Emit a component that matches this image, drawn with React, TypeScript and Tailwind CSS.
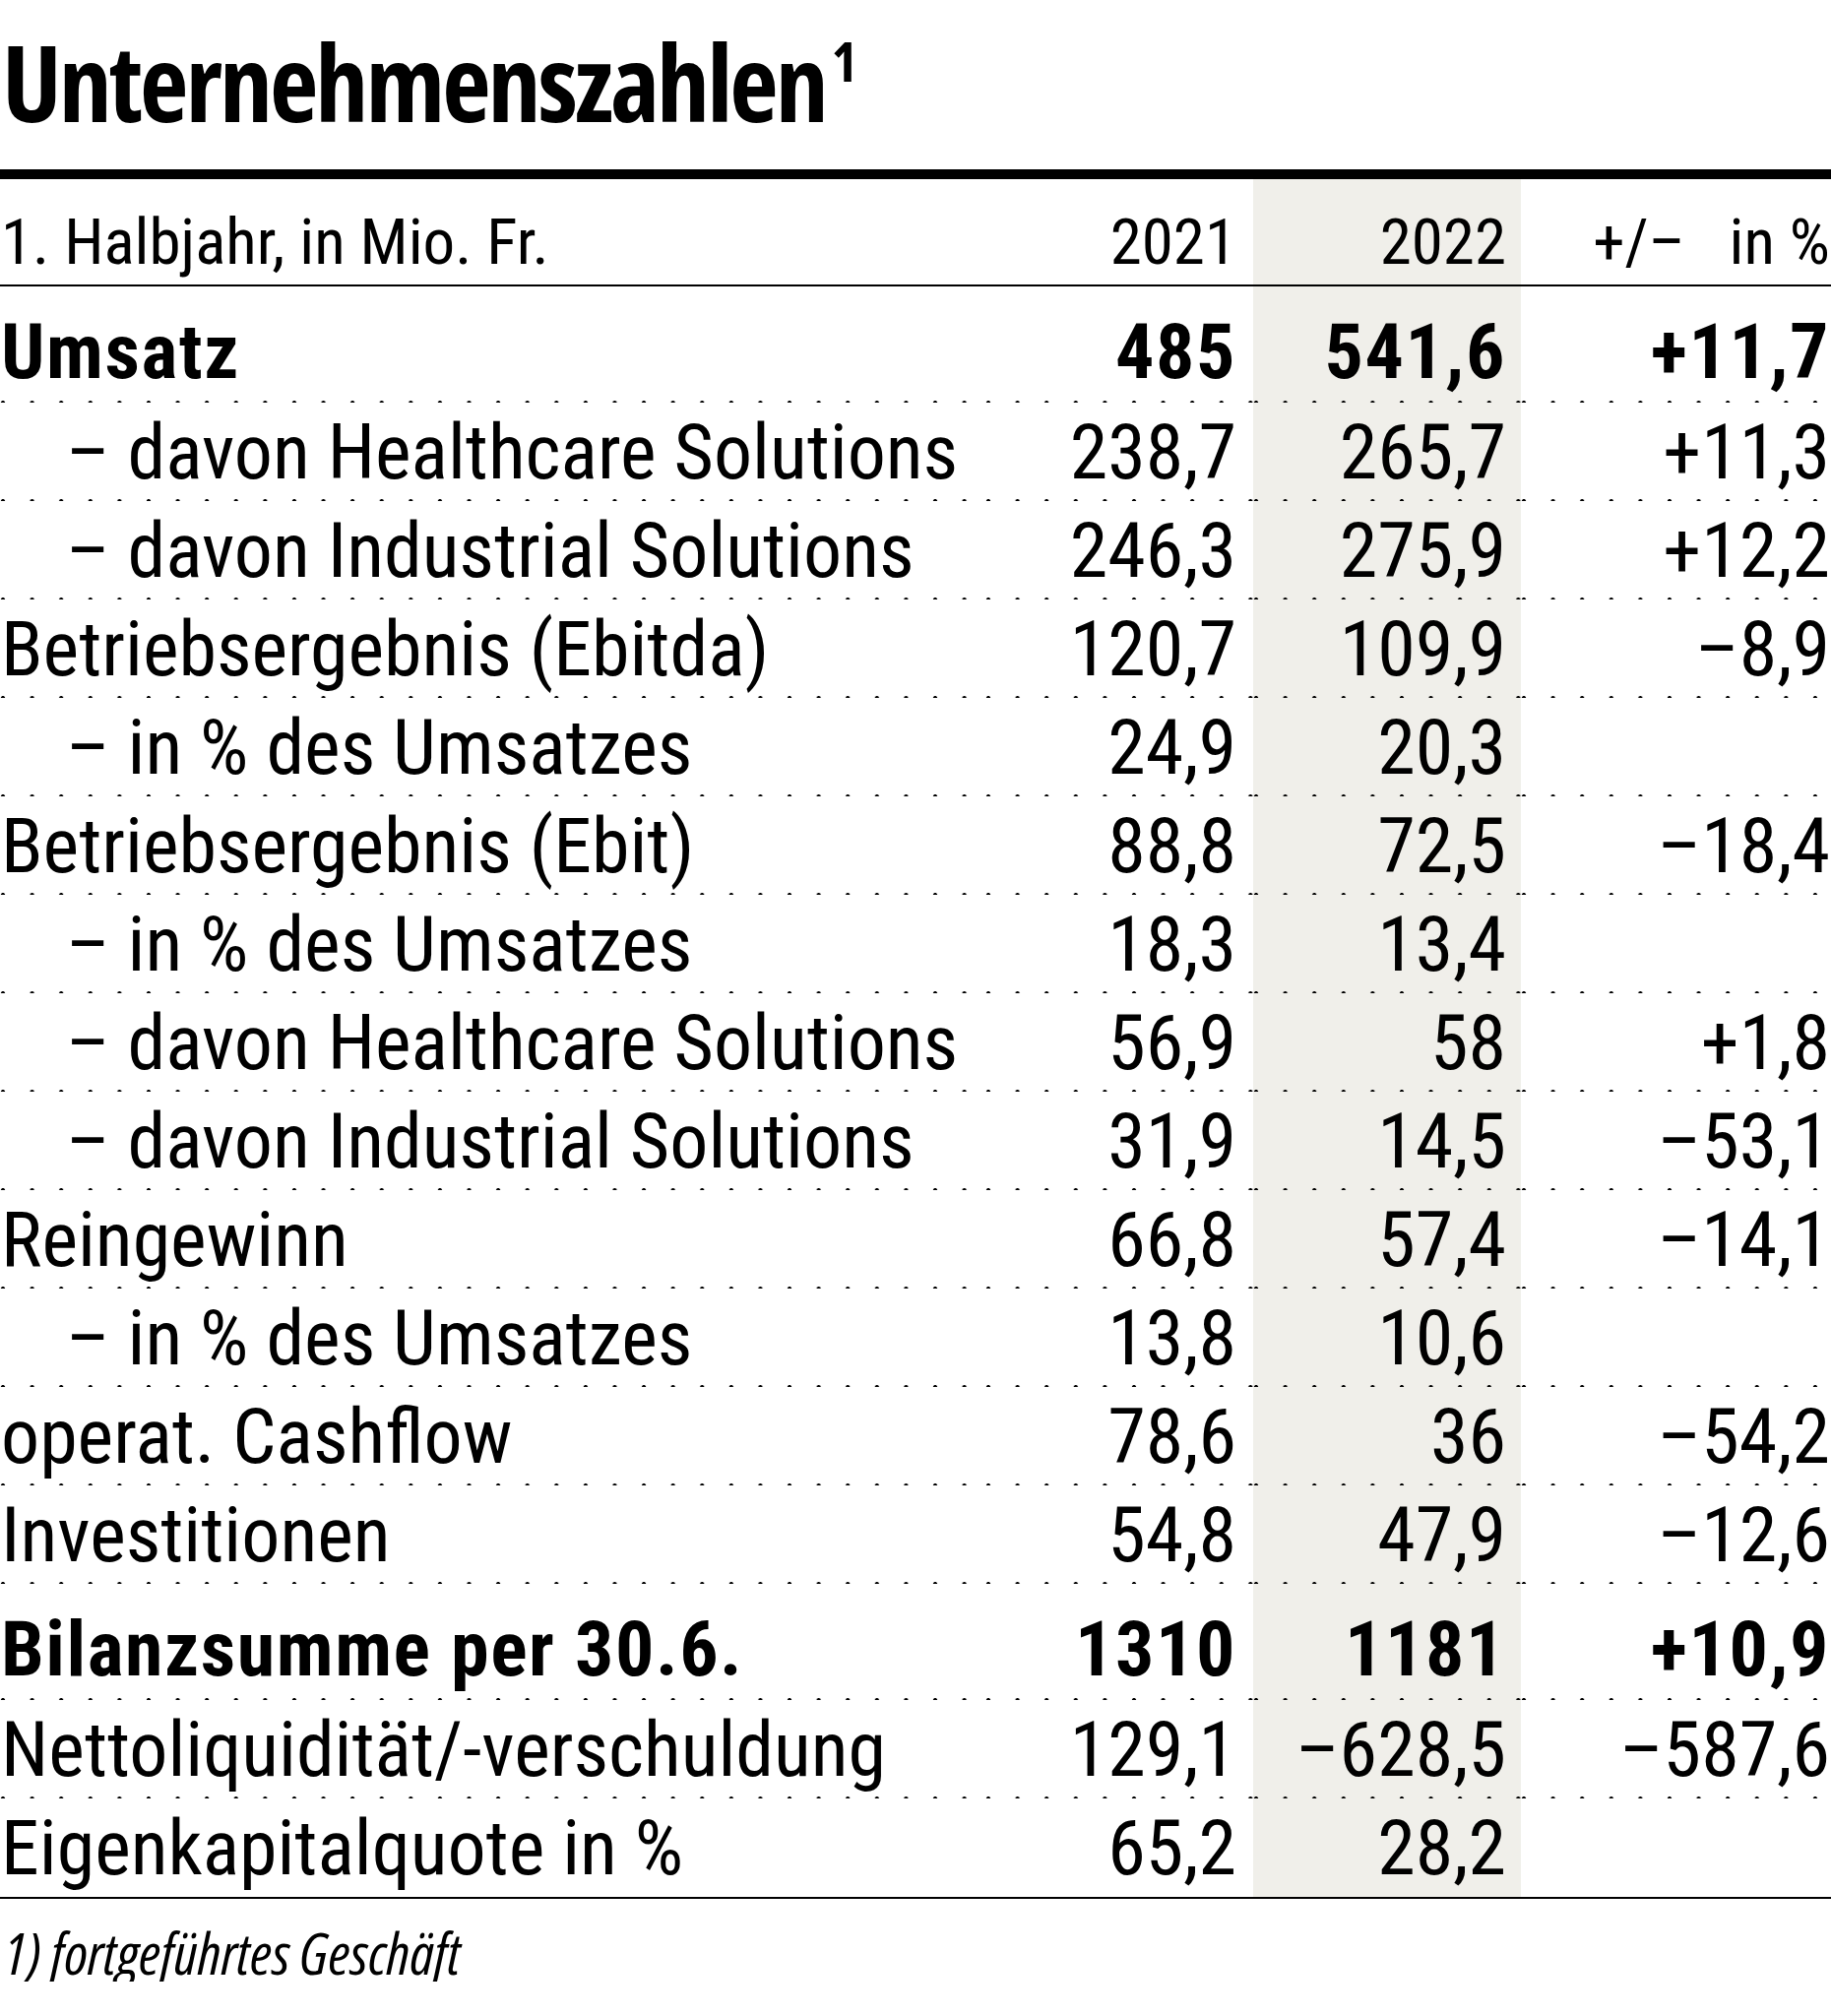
type Row = {
  label: string
  a: string
  b: string
  c: string
  sub?: boolean
  bold?: boolean
  last?: boolean
}

const rows: Row[] = [
  { label: "Umsatz", a: "485", b: "541,6", c: "+11,7", bold: true },
  { label: "– davon Healthcare Solutions", a: "238,7", b: "265,7", c: "+11,3", sub: true },
  { label: "– davon Industrial Solutions", a: "246,3", b: "275,9", c: "+12,2", sub: true },
  { label: "Betriebsergebnis (Ebitda)", a: "120,7", b: "109,9", c: "–8,9" },
  { label: "– in % des Umsatzes", a: "24,9", b: "20,3", c: "", sub: true },
  { label: "Betriebsergebnis (Ebit)", a: "88,8", b: "72,5", c: "–18,4" },
  { label: "– in % des Umsatzes", a: "18,3", b: "13,4", c: "", sub: true },
  { label: "– davon Healthcare Solutions", a: "56,9", b: "58", c: "+1,8", sub: true },
  { label: "– davon Industrial Solutions", a: "31,9", b: "14,5", c: "–53,1", sub: true },
  { label: "Reingewinn", a: "66,8", b: "57,4", c: "–14,1" },
  { label: "– in % des Umsatzes", a: "13,8", b: "10,6", c: "", sub: true },
  { label: "operat. Cashflow", a: "78,6", b: "36", c: "–54,2" },
  { label: "Investitionen", a: "54,8", b: "47,9", c: "–12,6" },
  { label: "Bilanzsumme per 30.6.", a: "1310", b: "1181", c: "+10,9", bold: true },
  { label: "Nettoliquidität/-verschuldung", a: "129,1", b: "–628,5", c: "–587,6" },
  { label: "Eigenkapitalquote in %", a: "65,2", b: "28,2", c: "", last: true },
]

// dotted rule drawn at the bottom edge of every cell
const dots =
  "bg-[image:radial-gradient(circle,#000_2.1px,transparent_2.7px)] bg-[length:29.6px_7px] bg-[position:-11.8px_calc(100%+3.5px)] bg-repeat-x"

function TableRow({ r }: { r: Row }) {
  const h = r.bold ? "h-[118px] pb-[12px]" : "h-[100px] pb-[10px]"
  const weight = r.bold ? "font-bold tracking-[0.02em]" : "font-normal"
  const line = r.last ? "" : dots
  return (
    <div className={`grid grid-cols-[1fr_272px_272px_315px] text-[78px] leading-none ${weight}`}>
      <div className={`flex items-end ${h} ${line} ${r.sub ? "pl-[67px]" : "pl-[1px]"} whitespace-nowrap`}>
        {r.label}
      </div>
      <div className={`flex items-end justify-end ${h} ${line} pr-[17px]`}>{r.a}</div>
      <div className={`flex items-end justify-end ${h} ${line} bg-[#f0efea] pr-[15px]`}>{r.b}</div>
      <div className={`flex items-end justify-end ${h} ${line} pr-[1px]`}>{r.c}</div>
    </div>
  )
}

export default function App() {
  return (
    <div className="w-[1860px] bg-white text-black font-['Roboto_Condensed',Roboto,sans-serif] [font-stretch:75%]">
      <h1 className="mt-[29px] mb-[35px] pl-[2px] font-['Open_Sans',sans-serif] text-[108px] font-bold leading-none tracking-[-3px]">
        Unternehmenszahlen
        <span className="relative top-[4px] pl-[6px] align-top text-[56px] leading-none">1</span>
      </h1>
      <div className="h-[10px] bg-black" />

      <div className="grid grid-cols-[1fr_272px_272px_315px] border-b-2 border-black text-[65px] leading-none">
        <div className="flex h-[107px] items-end pb-[10px] pl-[1px] whitespace-nowrap">1. Halbjahr, in Mio. Fr.</div>
        <div className="flex h-[107px] items-end justify-end pb-[10px] pr-[17px]">2021</div>
        <div className="flex h-[107px] items-end justify-end bg-[#f0efea] pb-[10px] pr-[15px]">2022</div>
        <div className="flex h-[107px] items-end justify-end pb-[10px] pr-[1px] whitespace-pre">+/–   in %</div>
      </div>

      <div className="border-b-2 border-black">
        {rows.map((r, i) => (
          <TableRow key={i} r={r} />
        ))}
      </div>

      <p className="mt-[25px] pl-[4px] font-['Open_Sans',sans-serif] text-[59px] italic leading-none">
        1) fortgeführtes Geschäft
      </p>
    </div>
  )
}
